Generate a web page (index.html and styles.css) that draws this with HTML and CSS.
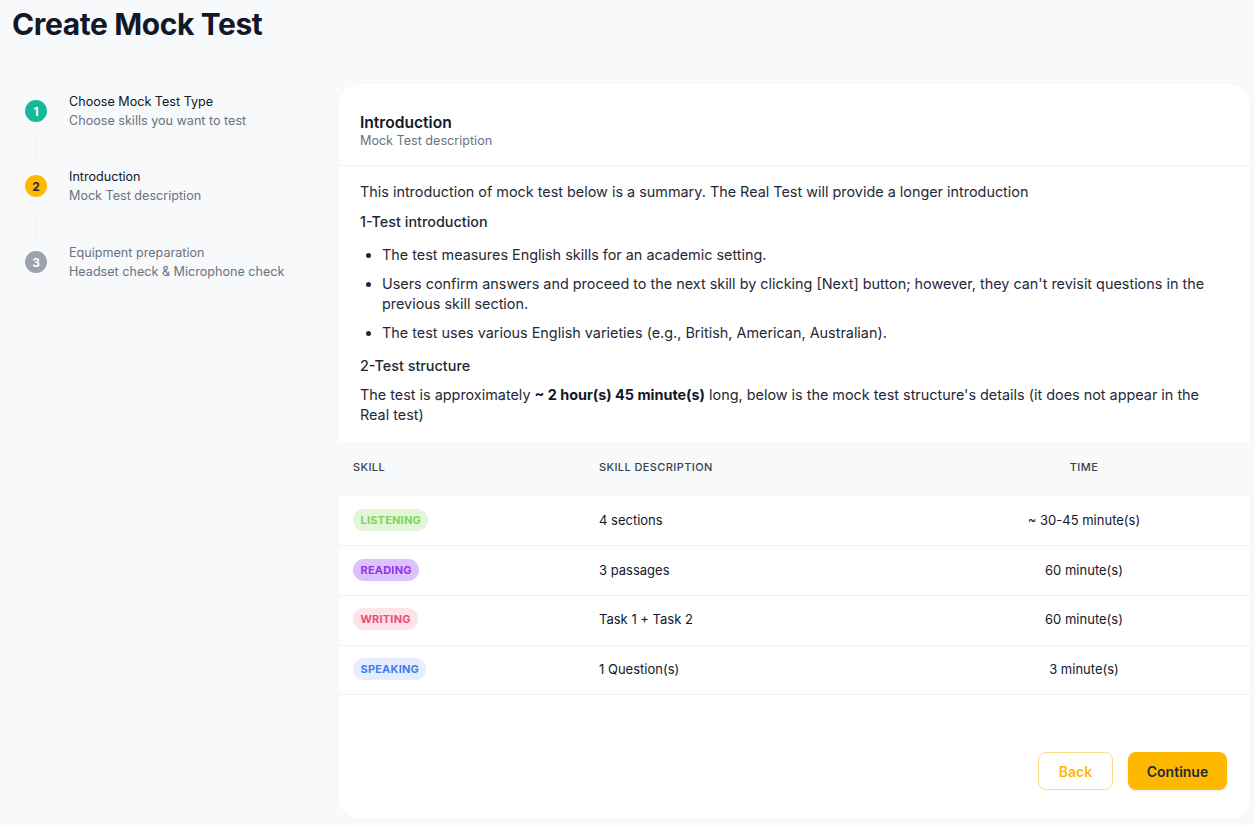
FILE: index.html
```html
<!DOCTYPE html>
<html lang="en">
<head>
<meta charset="utf-8">
<title>Create Mock Test</title>
<link rel="stylesheet" href="styles.css">
</head>
<body>
<div class="page">
  <h1 class="page-title">Create Mock Test</h1>
  <div class="layout">
    <aside class="steps">
      <div class="step">
        <span class="step-num done">1</span>
        <div class="step-text">
          <div class="step-title">Choose Mock Test Type</div>
          <div class="step-sub">Choose skills you want to test</div>
        </div>
      </div>
      <div class="step-line"></div>
      <div class="step">
        <span class="step-num current">2</span>
        <div class="step-text">
          <div class="step-title">Introduction</div>
          <div class="step-sub">Mock Test description</div>
        </div>
      </div>
      <div class="step-line last"></div>
      <div class="step">
        <span class="step-num pending">3</span>
        <div class="step-text">
          <div class="step-title muted">Equipment preparation</div>
          <div class="step-sub">Headset check &amp; Microphone check</div>
        </div>
      </div>
    </aside>

    <section class="card">
      <header class="card-head">
        <div class="card-title">Introduction</div>
        <div class="card-sub">Mock Test description</div>
      </header>
      <div class="card-body">
        <p class="lead">This introduction of mock test below is a summary. The Real Test will provide a longer introduction</p>
        <h3 class="sec-title">1-Test introduction</h3>
        <ul class="bullets">
          <li>The test measures English skills for an academic setting.</li>
          <li>Users confirm answers and proceed to the next skill by clicking [Next] button; however, they can't revisit questions in the previous skill section.</li>
          <li>The test uses various English varieties (e.g., British, American, Australian).</li>
        </ul>
        <h3 class="sec-title second">2-Test structure</h3>
        <p class="lead">The test is approximately <strong>~ 2 hour(s) 45 minute(s)</strong> long, below is the mock test structure's details (it does not appear in the Real test)</p>
      </div>
      <table class="skills">
        <thead>
          <tr>
            <th class="c-skill">Skill</th>
            <th class="c-desc">Skill Description</th>
            <th class="c-time">Time</th>
          </tr>
        </thead>
        <tbody>
          <tr>
            <td class="c-skill"><span class="badge listening">LISTENING</span></td>
            <td class="c-desc">4 sections</td>
            <td class="c-time">~ 30-45 minute(s)</td>
          </tr>
          <tr>
            <td class="c-skill"><span class="badge reading">READING</span></td>
            <td class="c-desc">3 passages</td>
            <td class="c-time">60 minute(s)</td>
          </tr>
          <tr>
            <td class="c-skill"><span class="badge writing">WRITING</span></td>
            <td class="c-desc">Task 1 + Task 2</td>
            <td class="c-time">60 minute(s)</td>
          </tr>
          <tr>
            <td class="c-skill"><span class="badge speaking">SPEAKING</span></td>
            <td class="c-desc">1 Question(s)</td>
            <td class="c-time">3 minute(s)</td>
          </tr>
        </tbody>
      </table>
      <footer class="card-foot">
        <button class="btn btn-back">Back</button>
        <button class="btn btn-continue">Continue</button>
      </footer>
    </section>
  </div>
</div>
</body>
</html>
```

FILE: styles.css
```css
* { box-sizing: border-box; }
html, body {
  margin: 0;
  padding: 0;
  background: #f8f9fb;
  font-family: Inter, "Noto Sans", "Liberation Sans", sans-serif;
  color: #111827;
}
.page {
  width: 1255px;
  min-height: 825px;
  overflow: hidden;
}
.page-title {
  margin: 0;
  padding: 0 0 0 12px;
  height: 84px;
  font-size: 30px;
  line-height: 48px;
  font-weight: 700;
  letter-spacing: -0.4px;
  color: #111827;
}
.layout {
  display: flex;
  align-items: flex-start;
}
.steps {
  width: 339px;
  flex: none;
  padding: 8px 0 0 25px;
}
.step {
  display: flex;
  align-items: center;
  gap: 22px;
  height: 38px;
}
.step-num {
  width: 22px;
  height: 22px;
  border-radius: 50%;
  flex: none;
  display: flex;
  align-items: center;
  justify-content: center;
  font-size: 12px;
  font-weight: 700;
  color: #fff;
}
.step-num.done { background: #17b897; }
.step-num.current { background: #ffb800; color: #1f2937; }
.step-num.pending { background: #9ca3af; }
.step-title {
  font-size: 12.6px;
  line-height: 19px;
  color: #111827;
}
.step-title.muted { color: #6b7280; }
.step-sub {
  font-size: 12.6px;
  line-height: 19px;
  color: #6b7280;
}
.step-line {
  width: 1px;
  height: 22px;
  margin: 9px 0 6px 10px;
  background: #eceef1;
}
.step-line.last { margin-bottom: 7px; }
.card {
  width: 911px;
  flex: none;
  background: #fff;
  border-radius: 20px;
  box-shadow: 0 0 2px rgba(17, 24, 39, 0.04);
  overflow: hidden;
}
.card-head {
  padding: 29px 21px 16px;
  border-bottom: 1px solid #eef0f2;
}
.card-title {
  font-size: 15.6px;
  line-height: 19px;
  font-weight: 600;
  color: #111827;
}
.card-sub {
  font-size: 12.6px;
  line-height: 17px;
  color: #6b7280;
}
.card-body {
  padding: 16px 21px 0;
  font-size: 14.4px;
  line-height: 20px;
  color: #1f2937;
}
.lead { margin: 0; }
.sec-title {
  margin: 10px 0 0;
  font-size: 14.4px;
  line-height: 20px;
  font-weight: 500;
  color: #1f2937;
}
.sec-title.second { margin: 13px 0 9px; }
.bullets {
  margin: 13px 0 0;
  padding-left: 22px;
}
.bullets li { margin-bottom: 9px; }
.bullets li:last-child { margin-bottom: 0; }
.card-body strong { font-weight: 700; color: #111827; }
.skills {
  width: 100%;
  margin-top: 17px;
  border-collapse: collapse;
  font-size: 13px;
  color: #111827;
}
.skills thead th {
  background: #f8f9fb;
  height: 54px;
  padding: 0 14px 4px;
  font-size: 11px;
  font-weight: 500;
  text-transform: uppercase;
  letter-spacing: 0.4px;
  color: #374151;
  text-align: left;
}
.skills td {
  height: 49.7px;
  padding: 0 14px 2px;
  border-bottom: 1px solid #f0f1f3;
}
.c-skill { width: 246px; }
.c-desc { width: 333px; }
.skills .c-time { text-align: center; }
.badge {
  display: inline-block;
  height: 22px;
  line-height: 22px;
  padding: 0 7.5px;
  border-radius: 11px;
  font-size: 11px;
  font-weight: 700;
  letter-spacing: 0.2px;
}
.badge.listening { background: #e1f7d8; color: #7dd35f; }
.badge.reading { background: #dcc2fd; color: #9333ea; }
.badge.writing { background: #fde3ea; color: #ee4b7a; }
.badge.speaking { background: #e7edfe; color: #3b7ff2; }
.card-foot {
  display: flex;
  justify-content: flex-end;
  gap: 15px;
  padding: 57px 23px 29px;
}
.btn {
  height: 38px;
  border-radius: 8px;
  font-family: inherit;
  font-size: 14px;
  font-weight: 600;
  cursor: pointer;
}
.btn-back {
  width: 75px;
  background: #fff;
  border: 1px solid #fdd98a;
  color: #ffb800;
}
.btn-continue {
  width: 99px;
  background: #ffb800;
  border: none;
  color: #1f2937;
  box-shadow: 0 1px 3px rgba(0, 0, 0, 0.08);
}
```
